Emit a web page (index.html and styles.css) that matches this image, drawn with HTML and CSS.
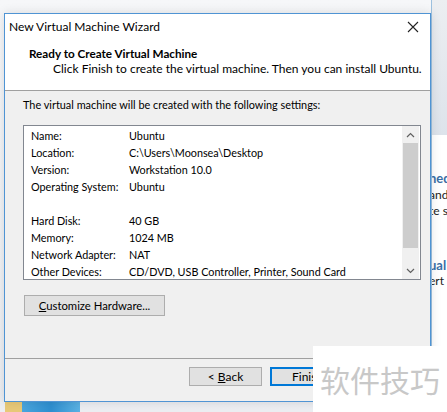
FILE: index.html
```html
<!DOCTYPE html>
<html>
<head>
<meta charset="utf-8">
<link rel="stylesheet" href="styles.css">
</head>
<body>
<div class="desktop">
  <div class="bgwin">
    <div class="bgwin-head"></div>
    <div class="bgwin-body">
      <div class="bg-line bg-strong l1">ned</div>
      <div class="bg-line l2">and</div>
      <div class="bg-line">te s</div>
      <div class="bg-line bg-strong l4">ual</div>
      <div class="bg-line">ert</div>
    </div>
  </div>
  <div class="taskicons">
    <span class="ti-yellow"></span><span class="ti-blue"></span>
  </div>
  <div class="dialog">
    <div class="titlebar">
      <span class="title">New Virtual Machine Wizard</span>
      <svg class="close" width="12" height="12" viewBox="0 0 12 12"><path d="M1 1 L11 11 M11 1 L1 11" stroke="#222" stroke-width="1.1" fill="none"/></svg>
    </div>
    <div class="header">
      <div class="heading">Ready to Create Virtual Machine</div>
      <div class="subtext">Click Finish to create the virtual machine. Then you can install Ubuntu.</div>
    </div>
    <div class="body">
      <div class="intro">The virtual machine will be created with the following settings:</div>
      <div class="listbox">
        <div class="rows">
          <div class="row"><span class="k">Name:</span><span>Ubuntu</span></div>
          <div class="row"><span class="k">Location:</span><span>C:\Users\Moonsea\Desktop</span></div>
          <div class="row"><span class="k">Version:</span><span>Workstation 10.0</span></div>
          <div class="row"><span class="k">Operating System:</span><span>Ubuntu</span></div>
          <div class="row"></div>
          <div class="row"><span class="k">Hard Disk:</span><span>40 GB</span></div>
          <div class="row"><span class="k">Memory:</span><span>1024 MB</span></div>
          <div class="row"><span class="k">Network Adapter:</span><span>NAT</span></div>
          <div class="row"><span class="k">Other Devices:</span><span>CD/DVD, USB Controller, Printer, Sound Card</span></div>
        </div>
        <div class="scrollbar">
          <div class="arrow"><svg width="9" height="6" viewBox="0 0 9 6"><path d="M1 5 L4.5 1.5 L8 5" stroke="#606060" stroke-width="1.2" fill="none"/></svg></div>
          <div class="thumb"></div>
          <div class="track"></div>
          <div class="arrow"><svg width="9" height="6" viewBox="0 0 9 6"><path d="M1 1 L4.5 4.5 L8 1" stroke="#606060" stroke-width="1.2" fill="none"/></svg></div>
        </div>
      </div>
      <button class="btn customize"><u>C</u>ustomize Hardware...</button>
    </div>
    <div class="footer">
      <button class="btn back">&lt; <u>B</u>ack</button>
      <div class="finish-clip"><button class="btn finish">Finish</button></div>
    </div>
  </div>
  <div class="watermark">软件技巧</div>
</div>
</body>
</html>
```
FILE: styles.css
```css
html, body {
  margin: 0;
  padding: 0;
}
body {
  width: 447px;
  height: 412px;
  overflow: hidden;
  background: linear-gradient(#f6f7f9, #eceef2);
  font-family: Lato, "Noto Sans", sans-serif;
  font-size: 12px;
  color: #000;
}
.desktop {
  position: relative;
  width: 447px;
  height: 412px;
  overflow: hidden;
}
.bgwin {
  position: absolute;
  left: 431px;
  top: 0;
  width: 16px;
  height: 412px;
  overflow: hidden;
  border-left: 1px solid #9cc0df;
  display: flex;
  flex-direction: column;
}
.bgwin-head {
  height: 135px;
  background: linear-gradient(#eceef1, #dde3eb);
}
.bgwin-body {
  flex: 1;
  background: #fff;
  padding-top: 35px;
  font-size: 12px;
  line-height: 16.5px;
  color: #222;
}
.bg-line {
  margin-left: -3px;
  white-space: nowrap;
  overflow: hidden;
}
.bg-strong {
  font-weight: bold;
  color: #3a6ea5;
  font-size: 13px;
}
.l4 {
  margin-top: 37px;
}
.taskicons {
  position: absolute;
  left: 5px;
  top: 401px;
  display: flex;
}
.ti-yellow {
  width: 17px;
  height: 11px;
  background: #e8c978;
}
.ti-blue {
  width: 58px;
  height: 11px;
  background: linear-gradient(90deg, #4aa6de, #2e8fd0 50%, #5ab2e4);
}
.dialog {
  position: absolute;
  left: 4px;
  top: 13px;
  width: 427px;
  height: 389px;
  box-sizing: border-box;
  border: 1px solid #4f94d4;
  background: #f0f0f0;
  display: flex;
  flex-direction: column;
  box-shadow: 0 0 10px rgba(0,0,0,0.12);
}
.titlebar {
  height: 25px;
  background: #fff;
  display: flex;
  align-items: center;
  justify-content: space-between;
  padding: 0 11px 0 4px;
}
.title {
  font-size: 12px;
  color: #000;
}
.close {
  display: block;
}
.header {
  height: 52px;
  background: #fff;
  box-sizing: border-box;
  padding: 6px 0 0 24px;
  border-bottom: 1px solid #a0a0a0;
}
.heading {
  font-weight: bold;
  font-size: 11.7px;
  line-height: 16px;
}
.subtext {
  line-height: 16px;
  padding-left: 24px;
}
.body {
  flex: 1;
  padding: 6px 0 0 18px;
  border-bottom: 1px solid #a0a0a0;
}
.intro {
  line-height: 16px;
  font-size: 10.9px;
}
.listbox {
  margin-top: 12px;
  width: 398px;
  height: 155px;
  box-sizing: border-box;
  border: 1px solid #828790;
  background: #fff;
  display: flex;
}
.rows {
  flex: 1;
  padding: 1px 0 0 7px;
  font-size: 10.8px;
}
.row {
  height: 17px;
  line-height: 17px;
  display: flex;
  white-space: nowrap;
}
.k {
  width: 98px;
  flex: none;
}
.scrollbar {
  width: 17px;
  display: flex;
  flex-direction: column;
  background: #f0f0f0;
  margin-right: 1px;
}
.arrow {
  height: 17px;
  display: flex;
  align-items: center;
  justify-content: center;
}
.thumb {
  height: 105px;
  background: #cdcdcd;
  margin: 0 1px;
}
.track {
  flex: 1;
}
.btn {
  font-family: Lato, "Noto Sans", sans-serif;
  font-size: 12px;
  color: #000;
  background: #e1e1e1;
  border: 1px solid #adadad;
  padding: 0;
  margin: 0;
  box-sizing: border-box;
}
.customize {
  display: block;
  margin-top: 15px;
  margin-left: 1px;
  width: 141px;
  height: 21px;
  font-size: 11.3px;
}
.footer {
  height: 34px;
  display: flex;
  align-items: flex-start;
  padding: 8px 0 0 184px;
  gap: 8px;
}
.back {
  width: 73px;
  height: 19px;
}
.finish-clip {
  width: 43px;
  height: 19px;
  overflow: hidden;
  flex: none;
}
.finish {
  width: 75px;
  height: 19px;
  border: 2px solid #0078d7;
  text-align: left;
  padding-left: 20px;
}
.watermark {
  position: absolute;
  left: 313px;
  top: 346px;
  width: 134px;
  height: 66px;
  background: #fff;
  color: #c8c8c8;
  font-family: "Noto Sans CJK SC", sans-serif;
  font-size: 30px;
  line-height: 66px;
  padding-left: 7px;
  box-sizing: border-box;
  white-space: nowrap;
}
```
